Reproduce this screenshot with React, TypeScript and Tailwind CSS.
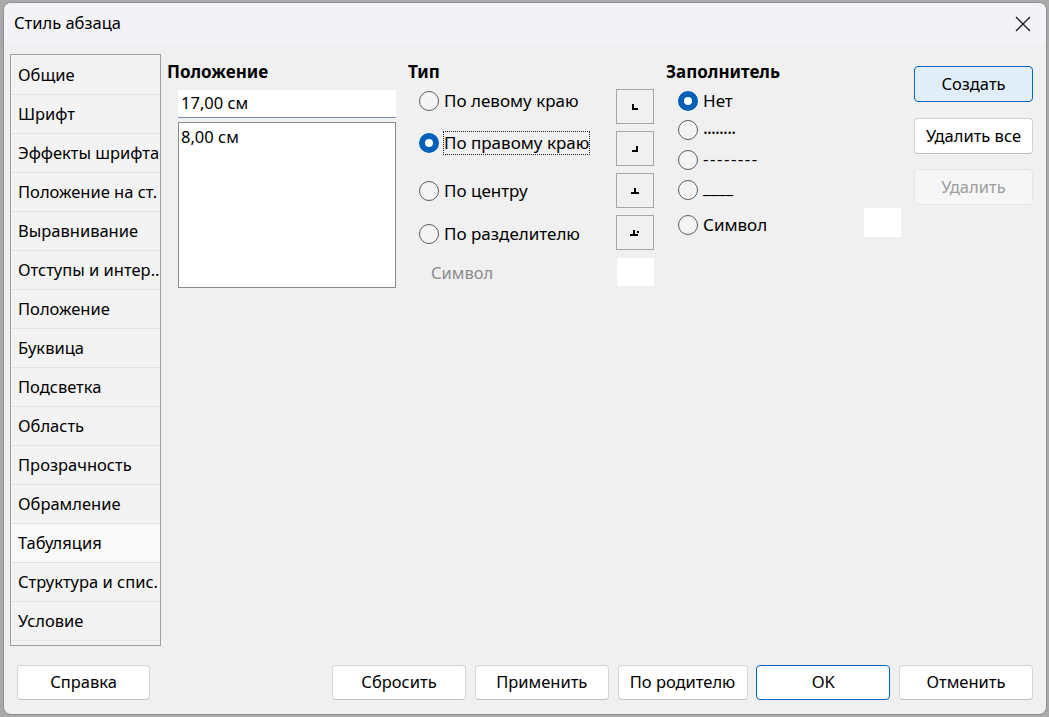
import React from "react";

const FONT = { fontFamily: '"Noto Sans", "Open Sans", sans-serif' };

function Radio({ checked }: { checked?: boolean }) {
  if (checked) {
    return (
      <span className="flex h-[20px] w-[20px] shrink-0 items-center justify-center rounded-full bg-[#005fb8]">
        <span className="h-[8px] w-[8px] rounded-full bg-white" />
      </span>
    );
  }
  return <span className="block h-[20px] w-[20px] shrink-0 rounded-full border border-[#5d5d5d] bg-[#f4f4f4]" />;
}

function TabIcon({ kind }: { kind: "left" | "right" | "center" | "decimal" }) {
  return (
    <svg width="10" height="8" viewBox="0 0 10 8" shapeRendering="crispEdges">
      {kind === "left" && (
        <>
          <rect x="2" y="1" width="2" height="6" fill="#000" />
          <rect x="2" y="5" width="6" height="2" fill="#000" />
        </>
      )}
      {kind === "right" && (
        <>
          <rect x="6" y="1" width="2" height="6" fill="#000" />
          <rect x="2" y="5" width="6" height="2" fill="#000" />
        </>
      )}
      {kind === "center" && (
        <>
          <rect x="4" y="1" width="2" height="6" fill="#000" />
          <rect x="1" y="5" width="8" height="2" fill="#000" />
        </>
      )}
      {kind === "decimal" && (
        <>
          <rect x="3" y="1" width="2" height="6" fill="#000" />
          <rect x="0" y="5" width="8" height="2" fill="#000" />
          <rect x="7" y="2" width="2" height="2" fill="#000" />
        </>
      )}
    </svg>
  );
}

const sideItems = [
  "Общие",
  "Шрифт",
  "Эффекты шрифта",
  "Положение на ст.",
  "Выравнивание",
  "Отступы и интер..",
  "Положение",
  "Буквица",
  "Подсветка",
  "Область",
  "Прозрачность",
  "Обрамление",
  "Табуляция",
  "Структура и спис.",
  "Условие",
];

function FooterButton({ label, w, primary }: { label: string; w: string; primary?: boolean }) {
  return (
    <button
      className={
        "flex h-[35px] shrink-0 items-center justify-center rounded-[4px] bg-white text-[16.5px] text-black " +
        w +
        (primary ? " border border-[#0067c0]" : " border border-[#d4d4d4] border-b-[#c2c2c2]")
      }
    >
      {label}
    </button>
  );
}

export default function App() {
  return (
    <div className="h-[717px] w-[1049px] overflow-hidden bg-[#a9a9a9] pl-[3px] pt-[2px]" style={FONT}>
      <div className="flex h-[713px] w-[1044px] flex-col overflow-hidden rounded-[8px] border border-[#8f8f8f] bg-[#f0f0f0] text-black">
        {/* Title bar */}
        <div className="flex h-[41px] shrink-0 items-center justify-between bg-[#f3f3f7] pl-[10px] pr-[15px]">
          <span className="text-[16.5px] leading-none">Стиль абзаца</span>
          <svg width="16" height="16" viewBox="0 0 16 16" className="mt-[1px]">
            <path d="M1 1 L15 15 M15 1 L1 15" stroke="#1a1a1a" strokeWidth="1.3" fill="none" />
          </svg>
        </div>

        {/* Main */}
        <div className="flex h-[602px] shrink-0 pl-[6px] pt-[10px]">
          {/* Sidebar */}
          <div className="flex h-[592px] w-[151px] shrink-0 flex-col overflow-hidden border border-[#a0a0a0] bg-[#f3f3f3] pt-[1px]">
            {sideItems.map((it) => (
              <div
                key={it}
                className={
                  "flex h-[39px] shrink-0 items-center overflow-hidden whitespace-nowrap border-b border-[#e4e4e4] pl-[7px] text-[16.5px] " +
                  (it === "Табуляция" ? "bg-[#f9f9f9]" : "")
                }
              >
                {it}
              </div>
            ))}
          </div>

          {/* Column 1: Положение */}
          <div className="ml-[6px] w-[241px] shrink-0">
            <div className="mt-[8px] text-[17px] font-bold leading-[20px]">Положение</div>
            <div className="ml-[11px] mt-[8px] flex h-[28px] w-[218px] items-center border-b border-[#7a8ea8] bg-white pl-[3px] text-[16.5px]">
              17,00 см
            </div>
            <div className="ml-[11px] mt-[4px] h-[166px] w-[218px] border border-[#8a8a8a] bg-white pl-[2px] pt-[2px] text-[16.5px] leading-[24px]">
              8,00 см
            </div>
          </div>

          {/* Column 2: Тип */}
          <div className="w-[258px] shrink-0">
            <div className="mt-[8px] text-[17px] font-bold leading-[20px]">Тип</div>
            <div className="flex">
              <div className="ml-[11px] w-[197px] shrink-0">
                <div className="mt-[7px] flex h-[24px] items-center gap-[5px] text-[17px]">
                  <Radio />
                  <span>По левому краю</span>
                </div>
                <div className="mt-[18px] flex h-[24px] items-center gap-[4px] text-[17px]">
                  <Radio checked />
                  <span className="border border-dotted border-[#222] leading-[22px]">По правому краю</span>
                </div>
                <div className="mt-[24px] flex h-[24px] items-center gap-[5px] text-[17px]">
                  <Radio />
                  <span>По центру</span>
                </div>
                <div className="mt-[19px] flex h-[24px] items-center gap-[5px] text-[17px]">
                  <Radio />
                  <span>По разделителю</span>
                </div>
                <div className="mt-[15px] flex h-[24px] items-center pl-[12px] text-[16.5px] text-[#8c8c8c]">Символ</div>
              </div>
              <div className="flex w-[38px] shrink-0 flex-col">
                <div className="mt-[7px] flex h-[35px] items-center justify-center border border-[#a6a6a6] bg-[#f0f0f0]">
                  <TabIcon kind="left" />
                </div>
                <div className="mt-[7px] flex h-[35px] items-center justify-center border border-[#a6a6a6] bg-[#f0f0f0]">
                  <TabIcon kind="right" />
                </div>
                <div className="mt-[7px] flex h-[35px] items-center justify-center border border-[#a6a6a6] bg-[#f0f0f0]">
                  <TabIcon kind="center" />
                </div>
                <div className="mt-[7px] flex h-[35px] items-center justify-center border border-[#a6a6a6] bg-[#f0f0f0]">
                  <TabIcon kind="decimal" />
                </div>
                <div className="ml-[1px] mt-[8px] h-[28px] w-[37px] bg-white" />
              </div>
            </div>
          </div>

          {/* Column 3: Заполнитель */}
          <div className="w-[248px] shrink-0">
            <div className="mt-[8px] text-[17px] font-bold leading-[20px]">Заполнитель</div>
            <div className="ml-[12px]">
              <div className="mt-[7px] flex h-[24px] items-center gap-[5px] text-[17px]">
                <Radio checked />
                <span>Нет</span>
              </div>
              <div className="mt-[5px] flex h-[24px] items-center gap-[5px] text-[17px]">
                <Radio />
                <span className="-mt-[6px] text-[18px] tracking-[-0.8px]">........</span>
              </div>
              <div className="mt-[6px] flex h-[24px] items-center gap-[5px] text-[17px]">
                <Radio />
                <span className="-mt-[2px] tracking-[1.5px]">--------</span>
              </div>
              <div className="mt-[6px] flex h-[24px] items-center gap-[5px] text-[17px]">
                <Radio />
                <span className="-mt-[4px]">____</span>
              </div>
              <div className="mt-[11px] flex h-[24px] items-center text-[17px]">
                <div className="flex w-[186px] items-center gap-[5px]">
                  <Radio />
                  <span>Символ</span>
                </div>
                <div className="-mt-[6px] h-[29px] w-[37px] bg-white" />
              </div>
            </div>
          </div>

          {/* Buttons column */}
          <div className="flex w-[119px] shrink-0 flex-col">
            <button className="mt-[12px] flex h-[36px] items-center justify-center rounded-[4px] border border-[#0067c0] bg-[#e0eef9] text-[16.5px]">
              Создать
            </button>
            <button className="mt-[16px] flex h-[36px] items-center justify-center rounded-[4px] border border-[#d0d0d0] border-b-[#c0c0c0] bg-white text-[16.5px]">
              Удалить все
            </button>
            <button className="mt-[15px] flex h-[36px] items-center justify-center rounded-[4px] border border-[#e5e5e5] bg-[#f6f6f6] text-[16.5px] text-[#9d9d9d]">
              Удалить
            </button>
          </div>
        </div>

        {/* Footer */}
        <div className="flex pl-[13px] pr-[13px] pt-[19px]">
          <FooterButton label="Справка" w="w-[133px]" />
          <div className="flex-1" />
          <div className="flex gap-[8.75px]">
            <FooterButton label="Сбросить" w="w-[134px]" />
            <FooterButton label="Применить" w="w-[134px]" />
            <FooterButton label="По родителю" w="w-[130px]" />
            <FooterButton label="OK" w="w-[134px]" primary />
            <FooterButton label="Отменить" w="w-[134px]" />
          </div>
        </div>
      </div>
    </div>
  );
}
